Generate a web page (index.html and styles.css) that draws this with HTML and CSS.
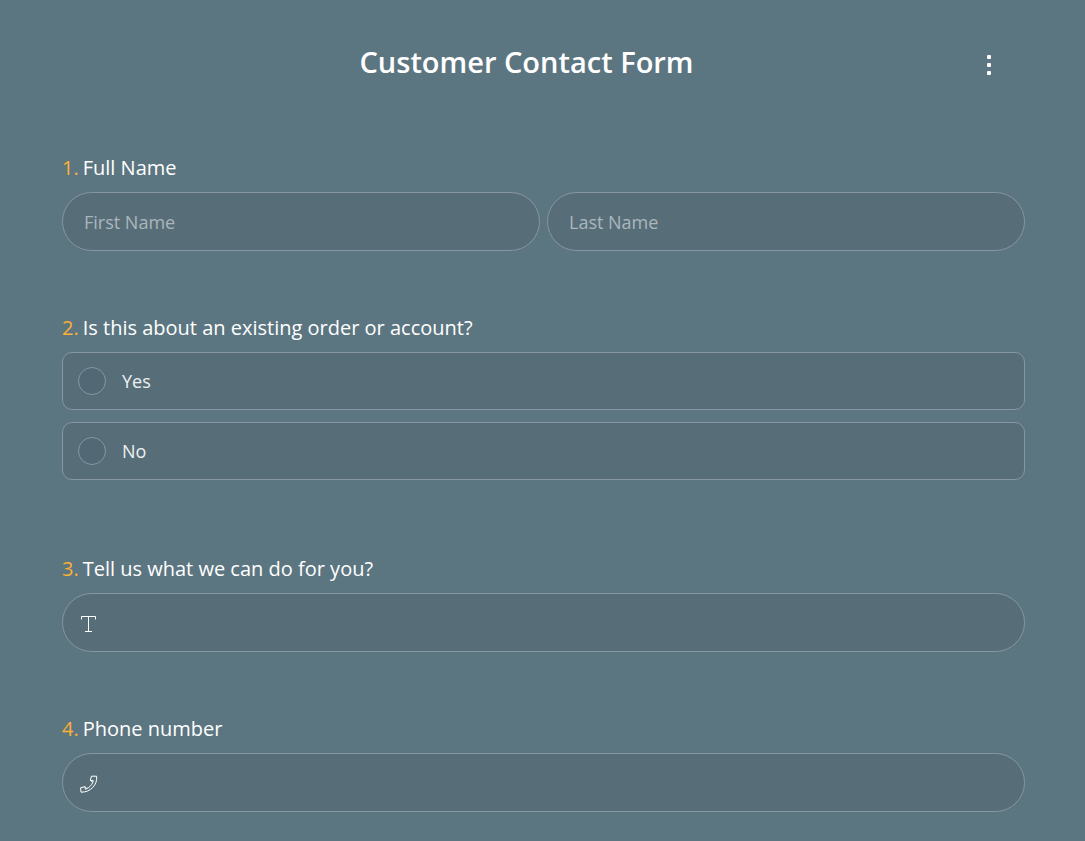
FILE: index.html
```html
<!DOCTYPE html>
<html lang="en">
<head>
    <meta charset="UTF-8">
    <meta name="viewport" content="width=device-width, initial-scale=1.0">
    <title>Customer Contact Form</title>
    <link rel="stylesheet" href="styles.css">
</head>
<body>
    <form class="contact-form">
        <header class="form-header">
            <h1 class="form-title">Customer Contact Form</h1>
            <button type="button" class="menu-button" aria-label="Menu">
                <svg width="6" height="20" viewBox="0 0 6 20" fill="#fff">
                    <rect x="1" y="0" width="4" height="4" rx="1"/>
                    <rect x="1" y="8" width="4" height="4" rx="1"/>
                    <rect x="1" y="16" width="4" height="4" rx="1"/>
                </svg>
            </button>
        </header>

        <div class="question" role="group" aria-labelledby="nameLabel">
            <div class="question-label" id="nameLabel"><span class="number">1.</span>Full Name</div>
            <div class="name-row">
                <input type="text" class="field" placeholder="First Name" aria-label="First Name">
                <input type="text" class="field" placeholder="Last Name" aria-label="Last Name">
            </div>
        </div>

        <div class="question" role="radiogroup" aria-labelledby="existingLabel">
            <div class="question-label" id="existingLabel"><span class="number">2.</span>Is this about an existing order or account?</div>
            <div class="options">
                <label class="option"><input type="radio" class="radio" name="existing" value="yes">Yes</label>
                <label class="option"><input type="radio" class="radio" name="existing" value="no">No</label>
            </div>
        </div>

        <div class="question">
            <label class="question-label" for="message"><span class="number">3.</span>Tell us what we can do for you?</label>
            <div class="field field-icon">
                <svg width="18" height="18" viewBox="0 0 18 18" fill="none" stroke="#fff">
                    <path d="M1.5 4.5v-3h14v3M8.5 1.5v15M5 16.5h7"/>
                </svg>
                <input type="text" class="bare-input" id="message">
            </div>
        </div>

        <div class="question">
            <label class="question-label" for="phone"><span class="number">4.</span>Phone number</label>
            <div class="field field-icon">
                <svg width="18" height="18" viewBox="0 0 18 18" fill="none" stroke="#fff" stroke-linejoin="round">
                    <path d="M11.4 1.2L16.6 1.2C17.2 5.5 15.6 9.500 12.800 12.400C9.600 15.600 5.800 17.200 1 17.200L.6 12.800L5 11.600L6.800 13.600C9.400 12.400 11.700 10.200 12.800 7.400L10.400 5.400ZM5 11.600L5.300 14.200L6.800 13.600M10.400 5.400L13.300 5.700L12.800 7.400"/>
                </svg>
                <input type="tel" class="bare-input" id="phone">
            </div>
        </div>
    </form>
</body>
</html>
```
FILE: styles.css
```css
* { box-sizing: border-box; }
body {
    margin: 0;
    background-color: #5c7681;
    color: #fff;
    font-family: 'Open Sans', sans-serif;
    font-size: 18px;
}
.contact-form { padding: 40px 60px 28px 62px; }
.form-header {
    display: flex; align-items: center;
    height: 44px; margin-bottom: 70px;
    padding-right: 26px;
}
.form-title {
    flex: 1; margin: 0; padding-left: 12px;
    font-size: 29px; line-height: 44px; font-weight: 600;
    text-align: center;
}
.menu-button {
    display: flex; align-items: center; justify-content: center;
    width: 20px; height: 32px; padding: 6px 0 0;
    background: none; border: none; cursor: pointer;
}
.question { margin-bottom: 63px; }
.question:last-child { margin-bottom: 0; }
.question-label {
    display: block; margin-bottom: 10px;
    font-size: 20px; line-height: 28px;
}
.number { color: #fbb034; margin-right: 4px; }
.name-row { display: flex; gap: 7px; }
.field {
    flex: 1; min-width: 0; width: 100%; height: 59px;
    padding: 0 21px; color: #fff;
    background-color: #576e79;
    border: 1px solid #8796a0; border-radius: 30px;
    font-family: inherit; font-size: 18px;
}
.field::placeholder { color: #abb6bc; opacity: 1; }
.field-icon {
    display: flex; align-items: center; gap: 10px;
    padding: 2px 17px 0;
}
.bare-input {
    flex: 1; min-width: 0; padding: 0;
    background: none; border: none; outline: none;
    color: #fff; font-family: inherit; font-size: 18px;
}
.options { display: flex; flex-direction: column; gap: 12px; padding-bottom: 12px; }
.option {
    display: flex; align-items: center; gap: 16px;
    height: 58px; padding: 0 15px;
    background-color: #576e79; color: #edf0f2;
    border: 1px solid #8796a0; border-radius: 10px;
    cursor: pointer;
}
.radio {
    appearance: none;
    width: 28px; height: 28px; margin: 0;
    background-color: #526874;
    border: 1px solid #8796a0; border-radius: 50%;
}
.radio:checked { background-color: #fbb034; }
```
